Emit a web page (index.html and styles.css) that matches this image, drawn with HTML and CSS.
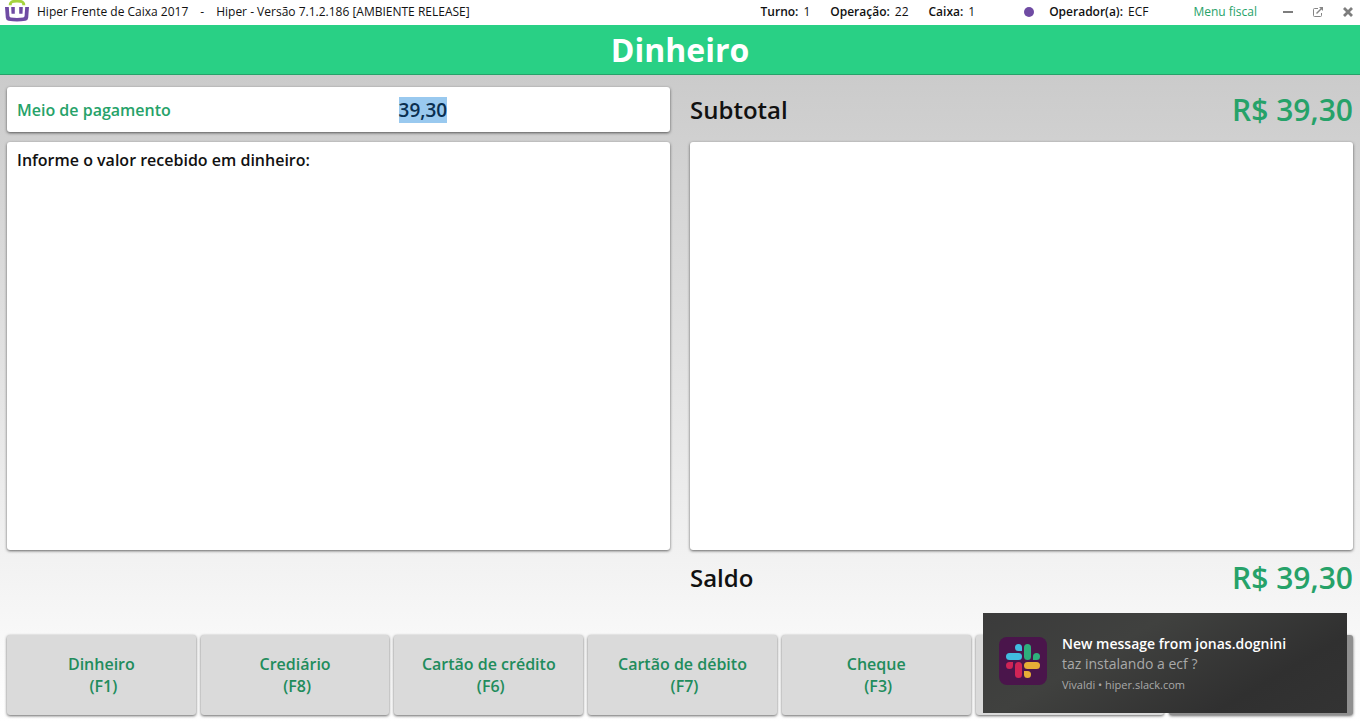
FILE: index.html
```html
<!DOCTYPE html>
<html lang="pt-BR">
<head>
<meta charset="utf-8">
<meta name="viewport" content="width=device-width, initial-scale=1">
<title>Hiper Frente de Caixa 2017</title>
<link rel="stylesheet" href="styles.css">
</head>
<body>
<div class="titlebar">
  <svg class="logo" width="24" height="22" viewBox="0 0 24 22" aria-hidden="true">
    <path d="M5.200 5.200C5.200 1.800 7 1 12 1s6.800 .8 6.800 4.200" fill="none" stroke="#a5d43f" stroke-width="3"/>
    <path d="M0 7h3.800l.6 9q.2 1.300 1.500 1.500 6.100.8 12.200 0 1.300-.2 1.500-1.500l.6-9H24l-.8 10.800q-.3 2.600-2.700 3-8.500 1.400-17 0-2.400-.4-2.700-3z" fill="#6f4ba3"/>
    <path d="M6.200 7h3.600v6.700H6.500zM14.200 7h3.600l-.3 6.700h-3.300z" fill="#6f4ba3"/>
  </svg>
  <span class="app-name">Hiper Frente de Caixa 2017</span>
  <span class="dash">-</span>
  <span>Hiper - Versão 7.1.2.186 [AMBIENTE RELEASE]</span>
  <div class="status">
    <span class="pair"><b>Turno:</b>1</span>
    <span class="pair"><b>Operação:</b>22</span>
    <span class="pair"><b>Caixa:</b>1</span>
  </div>
  <span class="dot"></span>
  <span class="pair"><b>Operador(a):</b>ECF</span>
  <a class="menu" href="#">Menu fiscal</a>
  <div class="window-controls">
    <button type="button" aria-label="Minimizar"><svg width="12" height="12" viewBox="0 0 12 12"><path d="M1 6h10" stroke="#7d7d7d" stroke-width="2"/></svg></button>
    <button type="button" aria-label="Restaurar"><svg width="12" height="12" viewBox="0 0 12 12" fill="none" stroke="#858585"><path d="M6 2.500H2.500q-1 0-1 1v6q0 1 1 1h6q1 0 1-1V7"/><path d="M4.500 7.500L10 2" stroke-width="1.400"/><path d="M7 1h4v4z" fill="#858585" stroke="none"/></svg></button>
    <button type="button" aria-label="Fechar"><svg width="12" height="12" viewBox="0 0 12 12"><path d="M2 2l8 8M10 2l-8 8" stroke="#7d7d7d" stroke-width="2.800"/></svg></button>
  </div>
</div>
<header class="banner"><h1>Dinheiro</h1></header>
<main class="checkout">
  <div class="columns">
    <section class="column">
      <div class="card payment">
        <label for="valor">Meio de pagamento</label>
        <input id="valor" type="text" value="39,30" autocomplete="off">
      </div>
      <div class="card panel">Informe o valor recebido em dinheiro:</div>
      <div class="total"></div>
    </section>
    <section class="column">
      <div class="total"><h2>Subtotal</h2><span class="amount">R$ 39,30</span></div>
      <div class="card panel"></div>
      <div class="total"><h2>Saldo</h2><span class="amount">R$ 39,30</span></div>
    </section>
  </div>
  <div class="methods">
    <button class="method" type="button">Dinheiro<span>(F1)</span></button>
    <button class="method" type="button">Crediário<span>(F8)</span></button>
    <button class="method" type="button">Cartão de crédito<span>(F6)</span></button>
    <button class="method" type="button">Cartão de débito<span>(F7)</span></button>
    <button class="method" type="button">Cheque<span>(F3)</span></button>
    <button class="method" type="button"></button>
    <button class="method dark" type="button"></button>
  </div>
</main>
<aside class="toast">
  <svg class="slack" width="48" height="48" viewBox="0 0 48 48" aria-hidden="true">
    <rect width="48" height="48" rx="8" fill="#4a154b"/>
    <g fill="#41bddf"><rect x="7" y="16" width="16" height="7" rx="3.500"/><path d="M23 14h-3.500A3.500 3.500 0 1 1 23 10.500z"/></g>
    <g fill="#2eaf7c"><rect x="25" y="7" width="7" height="16" rx="3.500"/><path d="M34 23v-3.500a3.500 3.500 0 1 1 3.500 3.500z"/></g>
    <g fill="#e6ae36"><rect x="25" y="25" width="16" height="7" rx="3.500"/><path d="M25 34h3.500a3.500 3.500 0 1 1-3.500 3.500z"/></g>
    <g fill="#d02456"><rect x="16" y="25" width="7" height="16" rx="3.500"/><path d="M14 25v3.500a3.500 3.500 0 1 1-3.500-3.500z"/></g>
  </svg>
  <div class="toast-text">
    <strong>New message from jonas.dognini</strong>
    <span class="message">taz instalando a ecf ?</span>
    <span class="source">Vivaldi • hiper.slack.com</span>
  </div>
</aside>
<script src="app.js"></script>
</body>
</html>
```
FILE: styles.css
```css
* { box-sizing: border-box; }
body {
  margin: 0;
  min-height: 100vh;
  display: flex;
  flex-direction: column;
  font-family: "Open Sans", "Noto Sans", sans-serif;
  color: #111;
  background: #fff;
}
button, input { font: inherit; }
.titlebar {
  display: flex;
  align-items: center;
  height: 25px;
  padding: 0 6px 2px 5px;
  font-size: 12px;
  line-height: 22px;
  white-space: nowrap;
}
.logo { margin-right: 8px; align-self: flex-start; }
.dash { margin: 0 12px; }
.titlebar b { font-weight: 600; margin-right: 5px; }
.status { display: flex; gap: 20px; margin-left: auto; }
.dot { width: 10px; height: 10px; border-radius: 50%; background: #6f4ba3; margin: 0 15px 0 49px; }
.menu { color: #26a269; text-decoration: none; margin: 0 25px 0 45px; }
.window-controls { display: flex; gap: 18px; }
.window-controls button { display: flex; padding: 0; border: 0; background: none; }
.banner {
  height: 50px;
  display: flex;
  align-items: center;
  justify-content: center;
  background: #29d085;
  border-bottom: 1px solid #26a269;
}
.banner h1 { margin: 0; color: #fff; font-size: 32px; line-height: 44px; font-weight: 700; }
.checkout {
  flex: 1;
  display: flex;
  flex-direction: column;
  padding: 12px 7px 7px;
  background: linear-gradient(#cbcbcb, #fff);
}
.columns { flex: 1; display: grid; grid-template-columns: 1fr 1fr; gap: 20px; }
.column { display: flex; flex-direction: column; }
.card { background: #fff; border-radius: 3px; box-shadow: 0 1px 3px rgba(0, 0, 0, .6); }
.payment { display: flex; align-items: center; height: 45px; padding-left: 10px; font-size: 16px; font-weight: 600; }
.payment label { color: #26a269; flex: none; }
.payment input {
  flex: 1;
  min-width: 0;
  margin-left: 5px;
  padding: 0;
  border: 0;
  outline: 0;
  background: none;
  color: #111;
  font-size: 19px;
  font-weight: 600;
  text-align: center;
}
.payment input::selection { background: #99c9ef; color: #0a2f50; }
.panel { flex: 1; margin-top: 10px; padding: 7px 10px; font-size: 16px; line-height: 22px; font-weight: 600; }
.total { display: flex; align-items: center; justify-content: space-between; height: 45px; }
.panel + .total { height: 54px; margin-bottom: 31px; }
.total h2 { margin: 0; font-size: 24px; font-weight: 600; }
.amount { color: #26a269; font-size: 30px; font-weight: 600; }
.methods { display: grid; grid-template-columns: repeat(6, 189fr) 184fr; gap: 5px; }
.method {
  display: flex;
  flex-direction: column;
  align-items: center;
  justify-content: center;
  height: 80px;
  padding: 0;
  border: 0;
  border-radius: 3px;
  background: #dadada;
  box-shadow: 0 1px 3px rgba(0, 0, 0, .6);
  color: #218c5c;
  font-size: 16px;
  line-height: 22px;
  font-weight: 600;
}
.method span { padding-left: 4px; }
.method.dark { background: #8f8f8f; }
.toast {
  position: fixed;
  right: 13px;
  bottom: 9px;
  width: 364px;
  height: 100px;
  display: flex;
  align-items: center;
  gap: 15px;
  padding: 0 16px 4px;
  background: linear-gradient(150deg, #3b3b3b, #40413f 35%, #303030 75%, #333);
  color: #a9a9a9;
}
.slack { flex: none; }
.toast-text { display: flex; flex-direction: column; padding-top: 8px; white-space: nowrap; }
.toast strong { color: #fff; font-size: 14px; line-height: 20px; font-weight: 600; }
.message { font-size: 14px; line-height: 20px; }
.source { font-size: 11px; line-height: 22px; }
```
FILE: app.js
```js
const valor = document.getElementById("valor");
valor.focus();
valor.select();
```
